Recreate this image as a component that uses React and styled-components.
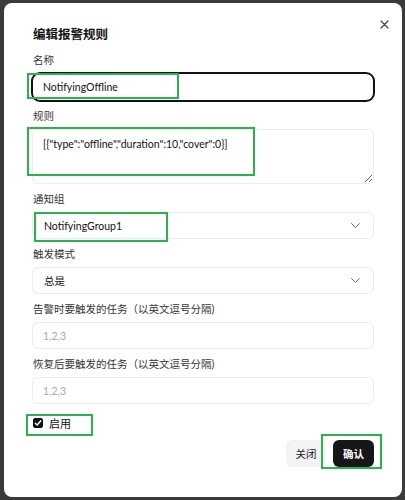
import React, { useState } from 'react';
import styled, { createGlobalStyle } from 'styled-components';

const GlobalStyle = createGlobalStyle`
  html, body {
    margin: 0;
    padding: 0;
    background: #3b3b3b;
  }
  * {
    box-sizing: border-box;
  }
`;

const App = () => {
  const [name, setName] = useState('NotifyingOffline');
  const [rule, setRule] = useState('[{"type":"offline","duration":10,"cover":0}]');
  const [enabled, setEnabled] = useState(true);

  return (
    <Overlay>
      <GlobalStyle />
      <Modal>
        <CloseButton aria-label="close">
          <svg width="9" height="9" viewBox="0 0 9 9">
            <path d="M1 1 L8 8 M8 1 L1 8" stroke="#444" strokeWidth="1.2" strokeLinecap="round" />
          </svg>
        </CloseButton>
        <Title>编辑报警规则</Title>
        <Form>
          <Field>
            <Label>名称</Label>
            <Control>
              <Input $focused value={name} onChange={(e) => setName(e.target.value)} />
              <Mark $x={-5} $y={0} $w={152} $h={26} />
            </Control>
          </Field>
          <Field>
            <Label>规则</Label>
            <Control>
              <TextArea value={rule} onChange={(e) => setRule(e.target.value)} />
              <Mark $x={-5} $y={-2} $w={228} $h={49} />
            </Control>
          </Field>
          <Field>
            <Label>通知组</Label>
            <Control>
              <Select>
                <span>NotifyingGroup1</span>
                <Chevron />
              </Select>
              <Mark $x={2} $y={0} $w={134} $h={30} />
            </Control>
          </Field>
          <Field>
            <Label>触发模式</Label>
            <Select>
              <span>总是</span>
              <Chevron />
            </Select>
          </Field>
          <Field>
            <Label>告警时要触发的任务（以英文逗号分隔)</Label>
            <Input placeholder="1,2,3" />
          </Field>
          <Field>
            <Label>恢复后要触发的任务（以英文逗号分隔)</Label>
            <Input placeholder="1,2,3" />
          </Field>
          <CheckRow onClick={() => setEnabled(!enabled)}>
            <CheckBox $checked={enabled}>
              {enabled && (
                <svg width="8" height="8" viewBox="0 0 8 8">
                  <path d="M1.3 4.2 L3.2 6 L6.8 1.8" fill="none" stroke="#fff" strokeWidth="1.4" strokeLinecap="round" strokeLinejoin="round" />
                </svg>
              )}
            </CheckBox>
            <CheckLabel>启用</CheckLabel>
            <Mark $x={-6} $y={1} $w={67} $h={22} />
          </CheckRow>
        </Form>
        <Footer>
          <Button>关闭</Button>
          <ButtonWrap>
            <Button $primary>确认</Button>
            <Mark $x={-12} $y={-6} $w={61} $h={35} />
          </ButtonWrap>
        </Footer>
      </Modal>
    </Overlay>
  );
};

const Chevron = () => (
  <svg width="9" height="5" viewBox="0 0 9 5">
    <path d="M0.6 0.6 L4.5 4.4 L8.4 0.6" fill="none" stroke="#666" strokeWidth="1" strokeLinecap="round" strokeLinejoin="round" />
  </svg>
);

export default App;

// STYLED COMPONENTS

const Overlay = styled.div`
  height: 500px;
  padding: 3px 3px 3px 4px;
  font-family: "Lato", "Noto Sans CJK SC", sans-serif;
`;

const Modal = styled.div`
  position: relative;
  height: 494px;
  background: #fff;
  border-radius: 8px;
  padding: 21px 28px 0 28px;
`;

const CloseButton = styled.button`
  position: absolute;
  top: 13px;
  right: 10px;
  width: 16px;
  height: 16px;
  display: flex;
  align-items: center;
  justify-content: center;
  background: none;
  border: none;
  padding: 0;
  cursor: pointer;
`;

const Title = styled.h2`
  margin: 0 0 4px 1px;
  font-size: 12.5px;
  line-height: 22px;
  font-weight: 700;
  color: #111;
`;

const Form = styled.div`
  display: flex;
  flex-direction: column;
  gap: 5px;
`;

const Field = styled.div`
  display: flex;
  flex-direction: column;
  gap: 3px;
`;

const Label = styled.label`
  font-size: 10.5px;
  line-height: 20px;
  color: #333;
  padding-left: 1px;
`;

const Control = styled.div`
  position: relative;
`;

const Mark = styled.span`
  position: absolute;
  left: ${(p) => p.$x}px;
  top: ${(p) => p.$y}px;
  width: ${(p) => p.$w}px;
  height: ${(p) => p.$h}px;
  border: 2px solid #2bb24c;
  pointer-events: none;
`;

const Input = styled.input`
  display: block;
  width: 100%;
  height: ${(p) => (p.$focused ? 28 : 27)}px;
  padding: 0 10px;
  font-family: inherit;
  font-size: 10.5px;
  color: #111;
  background: #fff;
  border: 1px solid ${(p) => (p.$focused ? '#111' : '#ececec')};
  border-radius: ${(p) => (p.$focused ? 8 : 6)}px;
  box-shadow: ${(p) => (p.$focused ? '0 0 0 1px #111' : 'none')};
  outline: none;

  &::placeholder {
    color: #a8a8a8;
  }
`;

const TextArea = styled.textarea`
  display: block;
  width: 100%;
  height: 55px;
  padding: 6px 10px;
  font-family: inherit;
  font-size: 10.5px;
  line-height: 16px;
  color: #111;
  border: 1px solid #ececec;
  border-radius: 6px;
  outline: none;
  resize: vertical;
`;

const Select = styled.div`
  display: flex;
  align-items: center;
  justify-content: space-between;
  height: 27px;
  padding: 0 13px 0 11px;
  font-size: 10.5px;
  color: #111;
  border: 1px solid #ececec;
  border-radius: 6px;
  cursor: pointer;
`;

const CheckRow = styled.div`
  position: relative;
  display: flex;
  align-items: center;
  gap: 6px;
  height: 20px;
  margin-top: 4px;
  padding-left: 1px;
  cursor: pointer;
`;

const CheckBox = styled.span`
  display: flex;
  align-items: center;
  justify-content: center;
  width: 10px;
  height: 10px;
  border-radius: 2px;
  background: ${(p) => (p.$checked ? '#111' : '#fff')};
  border: 1px solid #111;
`;

const CheckLabel = styled.span`
  font-size: 11px;
  color: #111;
`;

const Footer = styled.div`
  display: flex;
  justify-content: flex-end;
  gap: 7px;
  margin-top: 7px;
`;

const ButtonWrap = styled.div`
  position: relative;
`;

const Button = styled.button`
  display: block;
  width: ${(p) => (p.$primary ? 41 : 40)}px;
  height: 27px;
  padding: 0;
  font-family: inherit;
  font-size: 10.5px;
  font-weight: ${(p) => (p.$primary ? 700 : 400)};
  color: ${(p) => (p.$primary ? '#fff' : '#222')};
  background: ${(p) => (p.$primary ? '#161616' : '#f3f3f3')};
  border: none;
  border-radius: 6px;
  cursor: pointer;
`;
